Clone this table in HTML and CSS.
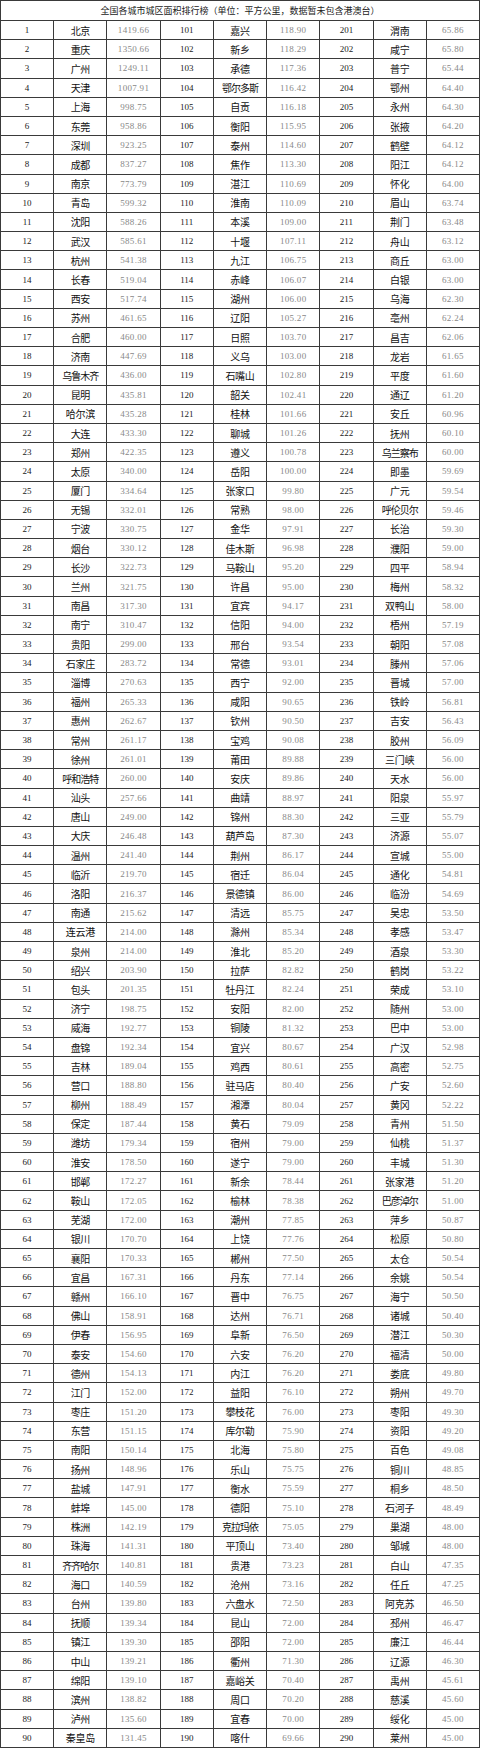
FILE: index.html
```html
<!DOCTYPE html>
<html lang="zh-CN">
<head>
<meta charset="utf-8">
<title>全国各城市城区面积排行榜</title>
<link rel="stylesheet" href="styles.css">
</head>
<body>
<table class="rank">
<thead>
<tr><th colspan="9" class="title">全国各城市城区面积排行榜（单位：平方公里，数据暂未包含港澳台）</th></tr>
</thead>
<tbody>
<tr><td>1</td><td>北京</td><td>1419.66</td><td>101</td><td>嘉兴</td><td>118.90</td><td>201</td><td>渭南</td><td>65.86</td></tr>
<tr><td>2</td><td>重庆</td><td>1350.66</td><td>102</td><td>新乡</td><td>118.29</td><td>202</td><td>咸宁</td><td>65.80</td></tr>
<tr><td>3</td><td>广州</td><td>1249.11</td><td>103</td><td>承德</td><td>117.36</td><td>203</td><td>普宁</td><td>65.44</td></tr>
<tr><td>4</td><td>天津</td><td>1007.91</td><td>104</td><td class="w">鄂尔多斯</td><td>116.42</td><td>204</td><td>鄂州</td><td>64.40</td></tr>
<tr><td>5</td><td>上海</td><td>998.75</td><td>105</td><td>自贡</td><td>116.18</td><td>205</td><td>永州</td><td>64.30</td></tr>
<tr><td>6</td><td>东莞</td><td>958.86</td><td>106</td><td>衡阳</td><td>115.95</td><td>206</td><td>张掖</td><td>64.20</td></tr>
<tr><td>7</td><td>深圳</td><td>923.25</td><td>107</td><td>泰州</td><td>114.60</td><td>207</td><td>鹤壁</td><td>64.12</td></tr>
<tr><td>8</td><td>成都</td><td>837.27</td><td>108</td><td>焦作</td><td>113.30</td><td>208</td><td>阳江</td><td>64.12</td></tr>
<tr><td>9</td><td>南京</td><td>773.79</td><td>109</td><td>湛江</td><td>110.69</td><td>209</td><td>怀化</td><td>64.00</td></tr>
<tr><td>10</td><td>青岛</td><td>599.32</td><td>110</td><td>淮南</td><td>110.09</td><td>210</td><td>眉山</td><td>63.74</td></tr>
<tr><td>11</td><td>沈阳</td><td>588.26</td><td>111</td><td>本溪</td><td>109.00</td><td>211</td><td>荆门</td><td>63.48</td></tr>
<tr><td>12</td><td>武汉</td><td>585.61</td><td>112</td><td>十堰</td><td>107.11</td><td>212</td><td>舟山</td><td>63.12</td></tr>
<tr><td>13</td><td>杭州</td><td>541.38</td><td>113</td><td>九江</td><td>106.75</td><td>213</td><td>商丘</td><td>63.00</td></tr>
<tr><td>14</td><td>长春</td><td>519.04</td><td>114</td><td>赤峰</td><td>106.07</td><td>214</td><td>白银</td><td>63.00</td></tr>
<tr><td>15</td><td>西安</td><td>517.74</td><td>115</td><td>湖州</td><td>106.00</td><td>215</td><td>乌海</td><td>62.30</td></tr>
<tr><td>16</td><td>苏州</td><td>461.65</td><td>116</td><td>辽阳</td><td>105.27</td><td>216</td><td>亳州</td><td>62.24</td></tr>
<tr><td>17</td><td>合肥</td><td>460.00</td><td>117</td><td>日照</td><td>103.70</td><td>217</td><td>昌吉</td><td>62.06</td></tr>
<tr><td>18</td><td>济南</td><td>447.69</td><td>118</td><td>义乌</td><td>103.00</td><td>218</td><td>龙岩</td><td>61.65</td></tr>
<tr><td>19</td><td class="w">乌鲁木齐</td><td>436.00</td><td>119</td><td>石嘴山</td><td>102.80</td><td>219</td><td>平度</td><td>61.60</td></tr>
<tr><td>20</td><td>昆明</td><td>435.81</td><td>120</td><td>韶关</td><td>102.41</td><td>220</td><td>通辽</td><td>61.20</td></tr>
<tr><td>21</td><td>哈尔滨</td><td>435.28</td><td>121</td><td>桂林</td><td>101.66</td><td>221</td><td>安丘</td><td>60.96</td></tr>
<tr><td>22</td><td>大连</td><td>433.30</td><td>122</td><td>聊城</td><td>101.26</td><td>222</td><td>抚州</td><td>60.10</td></tr>
<tr><td>23</td><td>郑州</td><td>422.35</td><td>123</td><td>遵义</td><td>100.78</td><td>223</td><td class="w">乌兰察布</td><td>60.00</td></tr>
<tr><td>24</td><td>太原</td><td>340.00</td><td>124</td><td>岳阳</td><td>100.00</td><td>224</td><td>即墨</td><td>59.69</td></tr>
<tr><td>25</td><td>厦门</td><td>334.64</td><td>125</td><td>张家口</td><td>99.80</td><td>225</td><td>广元</td><td>59.54</td></tr>
<tr><td>26</td><td>无锡</td><td>332.01</td><td>126</td><td>常熟</td><td>98.00</td><td>226</td><td class="w">呼伦贝尔</td><td>59.46</td></tr>
<tr><td>27</td><td>宁波</td><td>330.75</td><td>127</td><td>金华</td><td>97.91</td><td>227</td><td>长治</td><td>59.30</td></tr>
<tr><td>28</td><td>烟台</td><td>330.12</td><td>128</td><td>佳木斯</td><td>96.98</td><td>228</td><td>濮阳</td><td>59.00</td></tr>
<tr><td>29</td><td>长沙</td><td>322.73</td><td>129</td><td>马鞍山</td><td>95.20</td><td>229</td><td>四平</td><td>58.94</td></tr>
<tr><td>30</td><td>兰州</td><td>321.75</td><td>130</td><td>许昌</td><td>95.00</td><td>230</td><td>梅州</td><td>58.32</td></tr>
<tr><td>31</td><td>南昌</td><td>317.30</td><td>131</td><td>宜宾</td><td>94.17</td><td>231</td><td>双鸭山</td><td>58.00</td></tr>
<tr><td>32</td><td>南宁</td><td>310.47</td><td>132</td><td>信阳</td><td>94.00</td><td>232</td><td>梧州</td><td>57.19</td></tr>
<tr><td>33</td><td>贵阳</td><td>299.00</td><td>133</td><td>邢台</td><td>93.54</td><td>233</td><td>朝阳</td><td>57.08</td></tr>
<tr><td>34</td><td>石家庄</td><td>283.72</td><td>134</td><td>常德</td><td>93.01</td><td>234</td><td>滕州</td><td>57.06</td></tr>
<tr><td>35</td><td>淄博</td><td>270.63</td><td>135</td><td>西宁</td><td>92.00</td><td>235</td><td>晋城</td><td>57.00</td></tr>
<tr><td>36</td><td>福州</td><td>265.33</td><td>136</td><td>咸阳</td><td>90.65</td><td>236</td><td>铁岭</td><td>56.81</td></tr>
<tr><td>37</td><td>惠州</td><td>262.67</td><td>137</td><td>钦州</td><td>90.50</td><td>237</td><td>吉安</td><td>56.43</td></tr>
<tr><td>38</td><td>常州</td><td>261.17</td><td>138</td><td>宝鸡</td><td>90.08</td><td>238</td><td>胶州</td><td>56.09</td></tr>
<tr><td>39</td><td>徐州</td><td>261.01</td><td>139</td><td>莆田</td><td>89.88</td><td>239</td><td>三门峡</td><td>56.00</td></tr>
<tr><td>40</td><td class="w">呼和浩特</td><td>260.00</td><td>140</td><td>安庆</td><td>89.86</td><td>240</td><td>天水</td><td>56.00</td></tr>
<tr><td>41</td><td>汕头</td><td>257.66</td><td>141</td><td>曲靖</td><td>88.97</td><td>241</td><td>阳泉</td><td>55.97</td></tr>
<tr><td>42</td><td>唐山</td><td>249.00</td><td>142</td><td>锦州</td><td>88.30</td><td>242</td><td>三亚</td><td>55.79</td></tr>
<tr><td>43</td><td>大庆</td><td>246.48</td><td>143</td><td>葫芦岛</td><td>87.30</td><td>243</td><td>济源</td><td>55.07</td></tr>
<tr><td>44</td><td>温州</td><td>241.40</td><td>144</td><td>荆州</td><td>86.17</td><td>244</td><td>宣城</td><td>55.00</td></tr>
<tr><td>45</td><td>临沂</td><td>219.70</td><td>145</td><td>宿迁</td><td>86.04</td><td>245</td><td>通化</td><td>54.81</td></tr>
<tr><td>46</td><td>洛阳</td><td>216.37</td><td>146</td><td>景德镇</td><td>86.00</td><td>246</td><td>临汾</td><td>54.69</td></tr>
<tr><td>47</td><td>南通</td><td>215.62</td><td>147</td><td>清远</td><td>85.75</td><td>247</td><td>吴忠</td><td>53.50</td></tr>
<tr><td>48</td><td>连云港</td><td>214.00</td><td>148</td><td>滁州</td><td>85.34</td><td>248</td><td>孝感</td><td>53.47</td></tr>
<tr><td>49</td><td>泉州</td><td>214.00</td><td>149</td><td>淮北</td><td>85.20</td><td>249</td><td>酒泉</td><td>53.30</td></tr>
<tr><td>50</td><td>绍兴</td><td>203.90</td><td>150</td><td>拉萨</td><td>82.82</td><td>250</td><td>鹤岗</td><td>53.22</td></tr>
<tr><td>51</td><td>包头</td><td>201.35</td><td>151</td><td>牡丹江</td><td>82.24</td><td>251</td><td>荣成</td><td>53.10</td></tr>
<tr><td>52</td><td>济宁</td><td>198.75</td><td>152</td><td>安阳</td><td>82.00</td><td>252</td><td>随州</td><td>53.00</td></tr>
<tr><td>53</td><td>威海</td><td>192.77</td><td>153</td><td>铜陵</td><td>81.32</td><td>253</td><td>巴中</td><td>53.00</td></tr>
<tr><td>54</td><td>盘锦</td><td>192.34</td><td>154</td><td>宜兴</td><td>80.67</td><td>254</td><td>广汉</td><td>52.98</td></tr>
<tr><td>55</td><td>吉林</td><td>189.04</td><td>155</td><td>鸡西</td><td>80.61</td><td>255</td><td>高密</td><td>52.75</td></tr>
<tr><td>56</td><td>营口</td><td>188.80</td><td>156</td><td>驻马店</td><td>80.40</td><td>256</td><td>广安</td><td>52.60</td></tr>
<tr><td>57</td><td>柳州</td><td>188.49</td><td>157</td><td>湘潭</td><td>80.04</td><td>257</td><td>黄冈</td><td>52.22</td></tr>
<tr><td>58</td><td>保定</td><td>187.44</td><td>158</td><td>黄石</td><td>79.09</td><td>258</td><td>青州</td><td>51.50</td></tr>
<tr><td>59</td><td>潍坊</td><td>179.34</td><td>159</td><td>宿州</td><td>79.00</td><td>259</td><td>仙桃</td><td>51.37</td></tr>
<tr><td>60</td><td>淮安</td><td>178.50</td><td>160</td><td>遂宁</td><td>79.00</td><td>260</td><td>丰城</td><td>51.30</td></tr>
<tr><td>61</td><td>邯郸</td><td>172.27</td><td>161</td><td>新余</td><td>78.44</td><td>261</td><td>张家港</td><td>51.20</td></tr>
<tr><td>62</td><td>鞍山</td><td>172.05</td><td>162</td><td>榆林</td><td>78.38</td><td>262</td><td class="w">巴彦淖尔</td><td>51.00</td></tr>
<tr><td>63</td><td>芜湖</td><td>172.00</td><td>163</td><td>潮州</td><td>77.85</td><td>263</td><td>萍乡</td><td>50.87</td></tr>
<tr><td>64</td><td>银川</td><td>170.70</td><td>164</td><td>上饶</td><td>77.76</td><td>264</td><td>松原</td><td>50.80</td></tr>
<tr><td>65</td><td>襄阳</td><td>170.33</td><td>165</td><td>郴州</td><td>77.50</td><td>265</td><td>太仓</td><td>50.54</td></tr>
<tr><td>66</td><td>宜昌</td><td>167.31</td><td>166</td><td>丹东</td><td>77.14</td><td>266</td><td>余姚</td><td>50.54</td></tr>
<tr><td>67</td><td>赣州</td><td>166.10</td><td>167</td><td>晋中</td><td>76.75</td><td>267</td><td>海宁</td><td>50.50</td></tr>
<tr><td>68</td><td>佛山</td><td>158.91</td><td>168</td><td>达州</td><td>76.71</td><td>268</td><td>诸城</td><td>50.40</td></tr>
<tr><td>69</td><td>伊春</td><td>156.95</td><td>169</td><td>阜新</td><td>76.50</td><td>269</td><td>潜江</td><td>50.30</td></tr>
<tr><td>70</td><td>泰安</td><td>154.60</td><td>170</td><td>六安</td><td>76.20</td><td>270</td><td>福清</td><td>50.00</td></tr>
<tr><td>71</td><td>德州</td><td>154.13</td><td>171</td><td>内江</td><td>76.20</td><td>271</td><td>娄底</td><td>49.80</td></tr>
<tr><td>72</td><td>江门</td><td>152.00</td><td>172</td><td>益阳</td><td>76.10</td><td>272</td><td>朔州</td><td>49.70</td></tr>
<tr><td>73</td><td>枣庄</td><td>151.20</td><td>173</td><td>攀枝花</td><td>76.00</td><td>273</td><td>枣阳</td><td>49.30</td></tr>
<tr><td>74</td><td>东营</td><td>151.15</td><td>174</td><td>库尔勒</td><td>75.90</td><td>274</td><td>资阳</td><td>49.20</td></tr>
<tr><td>75</td><td>南阳</td><td>150.14</td><td>175</td><td>北海</td><td>75.80</td><td>275</td><td>百色</td><td>49.08</td></tr>
<tr><td>76</td><td>扬州</td><td>148.96</td><td>176</td><td>乐山</td><td>75.75</td><td>276</td><td>铜川</td><td>48.85</td></tr>
<tr><td>77</td><td>盐城</td><td>147.91</td><td>177</td><td>衡水</td><td>75.59</td><td>277</td><td>桐乡</td><td>48.50</td></tr>
<tr><td>78</td><td>蚌埠</td><td>145.00</td><td>178</td><td>德阳</td><td>75.10</td><td>278</td><td>石河子</td><td>48.49</td></tr>
<tr><td>79</td><td>株洲</td><td>142.19</td><td>179</td><td class="w">克拉玛依</td><td>75.05</td><td>279</td><td>巢湖</td><td>48.00</td></tr>
<tr><td>80</td><td>珠海</td><td>141.31</td><td>180</td><td>平顶山</td><td>73.40</td><td>280</td><td>邹城</td><td>48.00</td></tr>
<tr><td>81</td><td class="w">齐齐哈尔</td><td>140.81</td><td>181</td><td>贵港</td><td>73.23</td><td>281</td><td>白山</td><td>47.35</td></tr>
<tr><td>82</td><td>海口</td><td>140.59</td><td>182</td><td>沧州</td><td>73.16</td><td>282</td><td>任丘</td><td>47.25</td></tr>
<tr><td>83</td><td>台州</td><td>139.80</td><td>183</td><td>六盘水</td><td>72.50</td><td>283</td><td>阿克苏</td><td>46.50</td></tr>
<tr><td>84</td><td>抚顺</td><td>139.34</td><td>184</td><td>昆山</td><td>72.00</td><td>284</td><td>邳州</td><td>46.47</td></tr>
<tr><td>85</td><td>镇江</td><td>139.30</td><td>185</td><td>邵阳</td><td>72.00</td><td>285</td><td>廉江</td><td>46.44</td></tr>
<tr><td>86</td><td>中山</td><td>139.21</td><td>186</td><td>衢州</td><td>71.30</td><td>286</td><td>辽源</td><td>46.30</td></tr>
<tr><td>87</td><td>绵阳</td><td>139.10</td><td>187</td><td>嘉峪关</td><td>70.40</td><td>287</td><td>禹州</td><td>45.61</td></tr>
<tr><td>88</td><td>滨州</td><td>138.82</td><td>188</td><td>周口</td><td>70.20</td><td>288</td><td>慈溪</td><td>45.60</td></tr>
<tr><td>89</td><td>泸州</td><td>135.60</td><td>189</td><td>宜春</td><td>70.00</td><td>289</td><td>绥化</td><td>45.00</td></tr>
<tr><td>90</td><td>秦皇岛</td><td>131.45</td><td>190</td><td>喀什</td><td>69.66</td><td>290</td><td>莱州</td><td>45.00</td></tr>
</tbody>
</table>
</body>
</html>
```
FILE: styles.css
```css
html, body {
  margin: 0;
  padding: 0;
  background: #fff;
}

.rank {
  width: 480px;
  border-collapse: collapse;
  table-layout: fixed;
}

.rank th,
.rank td {
  border: 1px solid #3a3a3a;
  padding: 0;
  text-align: center;
  vertical-align: middle;
  white-space: nowrap;
  overflow: hidden;
  line-height: 12px;
}

.rank .title {
  height: 19px;
  font: 9px "Noto Sans CJK SC", sans-serif;
  color: #222;
  font-weight: normal;
}

.rank tbody tr {
  height: 19.2px;
}

.rank td:nth-child(3n+1) {
  font: 9px "Liberation Serif", serif;
  color: #222;
}

.rank td:nth-child(3n+2) {
  font: 10px "Noto Sans CJK SC", sans-serif;
  color: #111;
  letter-spacing: -0.3px;
}

.rank td.w {
  letter-spacing: -1px;
}

.rank td:nth-child(3n) {
  font: 9px "Liberation Serif", serif;
  color: #888;
  letter-spacing: 0.3px;
}
```
